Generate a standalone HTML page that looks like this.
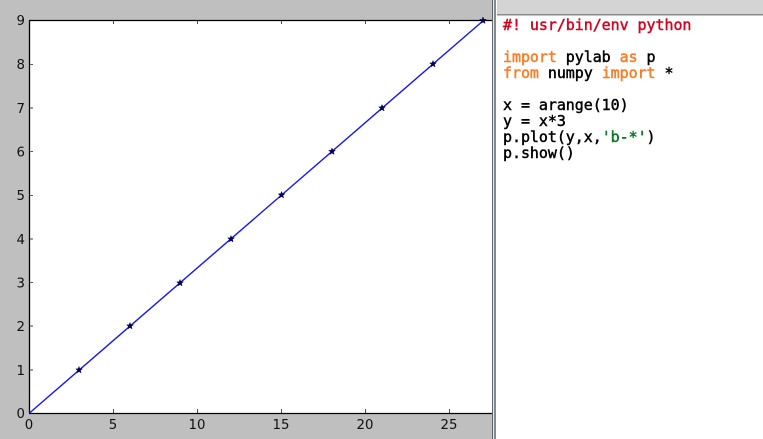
<!DOCTYPE html>
<html><head><meta charset="utf-8"><style>
html,body{margin:0;padding:0;background:#fff;width:763px;height:439px;overflow:hidden}
svg{position:absolute;left:0;top:0}
.c{position:absolute;left:503px;top:17px;margin:0;font:15px/16px "DejaVu Sans Mono","Liberation Mono",monospace;letter-spacing:-.06px;color:#000;white-space:pre;-webkit-text-stroke:.45px}
.k{color:#ff7a20}.r{color:#d80020}.g{color:#007a20}
</style></head><body>
<svg width="763" height="439" viewBox="0 0 763 439">
<defs><polygon id="s" points="0,-3.500 .9,-1.100 3.300,-1.100 1.400,.4 2.100,2.900 0,1.500 -2.100,2.900 -1.400,.4 -3.300,-1.100 -.9,-1.100" fill="#000060" stroke="#000040" stroke-width=".5"/></defs>
<rect width="492" height="439" fill="#bfbfbf"/>
<rect x="29.500" y="20.500" width="470" height="392.500" fill="#fff"/>
<rect x="492" width="271" height="439" fill="#fff"/>
<rect x="497" width="266" height="14" fill="#d4d4d4"/>
<rect x="497" y="14" width="266" height="1.500" fill="#8a8a8a"/>
<rect x="492" width="1" height="439" fill="#666"/>
<rect x="493" width="1" height="439" fill="#e6e9ec"/>
<rect x="494" width="2" height="439" fill="#7f8b98"/>
<path d="M29.500 20v393M29 413.500H492M29 20.500H492" stroke="#000" stroke-width="1.300" fill="none"/>
<g stroke="#000" stroke-width=".7" fill="none">
<path d="M29 370h4M29 326h4M29 282.700h4M29 239h4M29 195.300h4M29 151.700h4M29 108h4M29 64.300h4"/>
<path d="M113.500 413v-4M197.500 413v-4M281.500 413v-4M365.500 413v-4M449.500 413v-4M113.500 20v4M197.500 20v4M281.500 20v4M365.500 20v4M449.500 20v4"/>
</g>
<path d="M29.500 413L484 20" stroke="#1414ff" stroke-width="1.400" fill="none"/>
<use href="#s" x="79" y="370"/><use href="#s" x="130" y="326"/><use href="#s" x="180" y="283"/><use href="#s" x="231" y="239"/><use href="#s" x="281.500" y="195"/><use href="#s" x="332" y="151.500"/><use href="#s" x="382" y="108"/><use href="#s" x="433" y="64"/><use href="#s" x="483" y="20.500"/>
<g fill="#111" font-family="'DejaVu Sans',sans-serif" font-size="13.300">
<g text-anchor="end">
<text x="25" y="418">0</text><text x="25" y="375">1</text><text x="25" y="331">2</text><text x="25" y="287.500">3</text><text x="25" y="244">4</text><text x="25" y="200">5</text><text x="25" y="156.500">6</text><text x="25" y="113">7</text><text x="25" y="69">8</text><text x="25" y="25">9</text>
</g>
<g text-anchor="middle">
<text x="29" y="429">0</text><text x="113" y="429">5</text><text x="197" y="429">10</text><text x="281" y="429">15</text><text x="365" y="429">20</text><text x="449" y="429">25</text>
</g>
</g>
</svg>
<pre class="c"><span class="r">#! usr/bin/env python</span>

<span class="k">import</span> pylab <span class="k">as</span> p
<span class="k">from</span> numpy <span class="k">import</span> *

x = arange(10)
y = x*3
p.plot(y,x,<span class="g">'b-*'</span>)
p.show()</pre>
</body></html>
